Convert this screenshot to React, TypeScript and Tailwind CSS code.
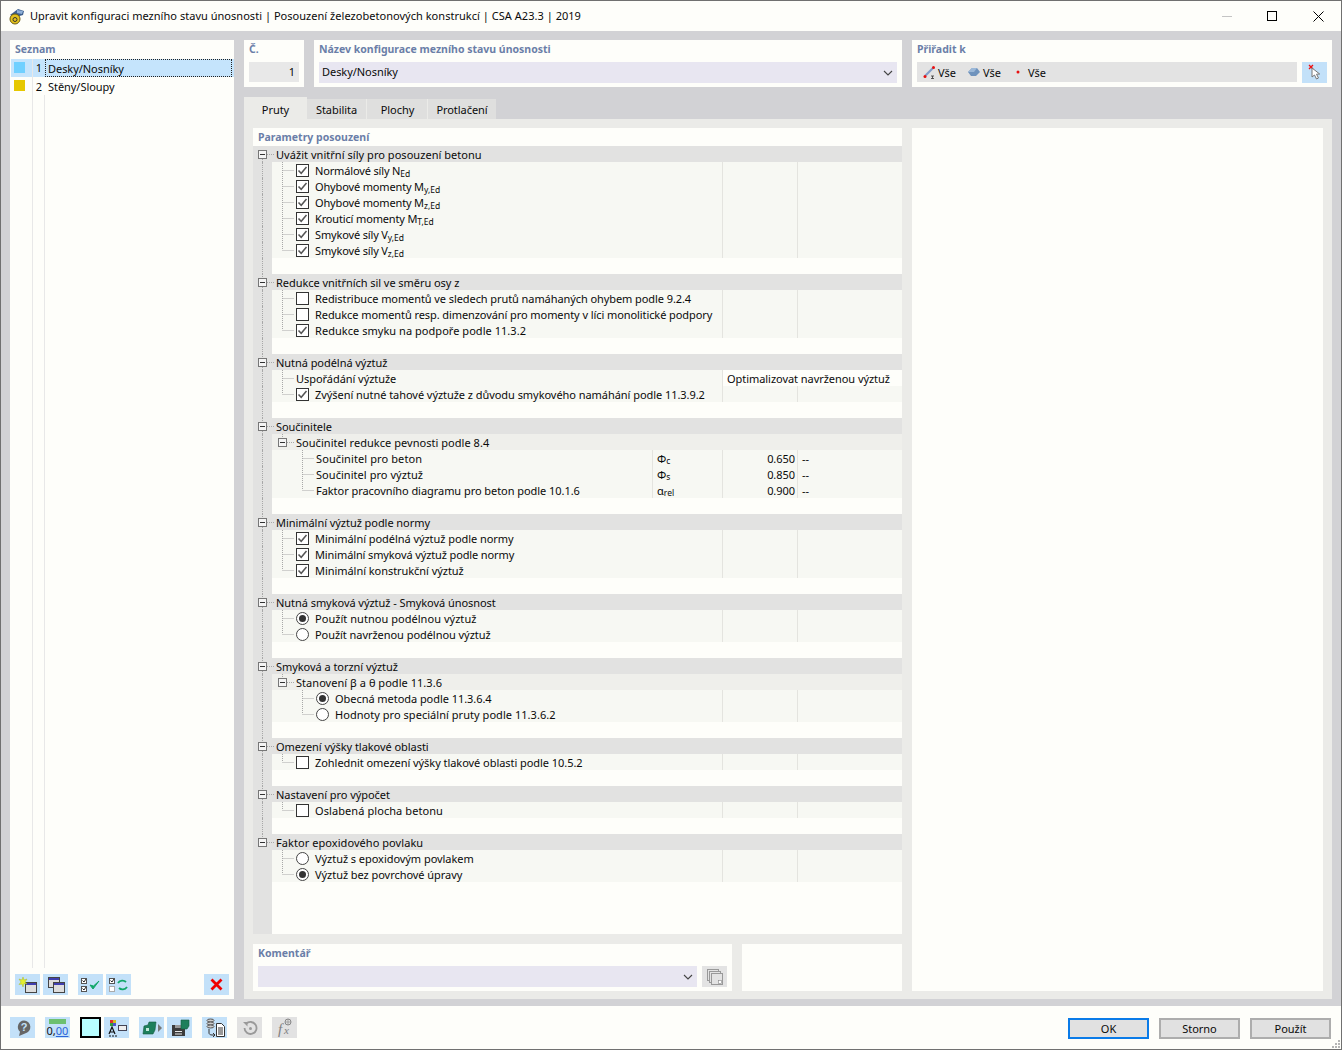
import type { ReactNode } from "react";

const DOT = "#a8a8a8";

type Item =
  | { type: "check"; label: ReactNode; on: boolean; level?: number }
  | { type: "radio"; label: ReactNode; on: boolean; level?: number }
  | { type: "text"; label: ReactNode; value?: string }
  | { type: "sub"; label: ReactNode }
  | { type: "coef"; label: ReactNode; symbol: ReactNode; value: string };

type Section = { title: ReactNode; items: Item[] };

const Sub = ({ children }: { children: ReactNode }) => <sub className="text-[8.5px] tracking-normal">{children}</sub>;
const Wide = ({ children }: { children: ReactNode }) => <span className="tracking-[0.04px]">{children}</span>;
const Tight = ({ children }: { children: ReactNode }) => <span className="tracking-[-0.15px]">{children}</span>;

const SECTIONS: Section[] = [
  {
    title: <Wide>Uvážit vnitřní síly pro posouzení betonu</Wide>,
    items: [
      { type: "check", on: true, label: <Tight>Normálové síly N<Sub>Ed</Sub></Tight> },
      { type: "check", on: true, label: <Tight>Ohybové momenty M<Sub>y,Ed</Sub></Tight> },
      { type: "check", on: true, label: <Tight>Ohybové momenty M<Sub>z,Ed</Sub></Tight> },
      { type: "check", on: true, label: <Tight>Krouticí momenty M<Sub>T,Ed</Sub></Tight> },
      { type: "check", on: true, label: <Tight>Smykové síly V<Sub>y,Ed</Sub></Tight> },
      { type: "check", on: true, label: <Tight>Smykové síly V<Sub>z,Ed</Sub></Tight> },
    ],
  },
  {
    title: "Redukce vnitřních sil ve směru osy z",
    items: [
      { type: "check", on: false, label: <span className="tracking-[-0.08px]">Redistribuce momentů ve sledech prutů namáhaných ohybem podle 9.2.4</span> },
      { type: "check", on: false, label: <span className="tracking-[-0.08px]">Redukce momentů resp. dimenzování pro momenty v líci monolitické podpory</span> },
      { type: "check", on: true, label: <Wide>Redukce smyku na podpoře podle 11.3.2</Wide> },
    ],
  },
  {
    title: "Nutná podélná výztuž",
    items: [
      { type: "text", label: "Uspořádání výztuže", value: "Optimalizovat navrženou výztuž" },
      { type: "check", on: true, label: "Zvýšení nutné tahové výztuže z důvodu smykového namáhání podle 11.3.9.2" },
    ],
  },
  {
    title: "Součinitele",
    items: [
      { type: "sub", label: <Wide>Součinitel redukce pevnosti podle 8.4</Wide> },
      { type: "coef", label: <span className="tracking-[0.1px]">Součinitel pro beton</span>, symbol: <>Φ<Sub>c</Sub></>, value: "0.650" },
      { type: "coef", label: <span className="tracking-[0.05px]">Součinitel pro výztuž</span>, symbol: <>Φ<Sub>s</Sub></>, value: "0.850" },
      { type: "coef", label: "Faktor pracovního diagramu pro beton podle 10.1.6", symbol: <>α<Sub>rel</Sub></>, value: "0.900" },
    ],
  },
  {
    title: "Minimální výztuž podle normy",
    items: [
      { type: "check", on: true, label: "Minimální podélná výztuž podle normy" },
      { type: "check", on: true, label: <span className="tracking-[-0.12px]">Minimální smyková výztuž podle normy</span> },
      { type: "check", on: true, label: "Minimální konstrukční výztuž" },
    ],
  },
  {
    title: "Nutná smyková výztuž - Smyková únosnost",
    items: [
      { type: "radio", on: true, label: <Wide>Použít nutnou podélnou výztuž</Wide> },
      { type: "radio", on: false, label: "Použít navrženou podélnou výztuž" },
    ],
  },
  {
    title: "Smyková a torzní výztuž",
    items: [
      { type: "sub", label: <Wide>Stanovení β a θ podle 11.3.6</Wide> },
      { type: "radio", level: 2, on: true, label: "Obecná metoda podle 11.3.6.4" },
      { type: "radio", level: 2, on: false, label: <Wide>Hodnoty pro speciální pruty podle 11.3.6.2</Wide> },
    ],
  },
  {
    title: "Omezení výšky tlakové oblasti",
    items: [{ type: "check", on: false, label: "Zohlednit omezení výšky tlakové oblasti podle 10.5.2" }],
  },
  {
    title: "Nastavení pro výpočet",
    items: [{ type: "check", on: false, label: <span className="tracking-[0.08px]">Oslabená plocha betonu</span> }],
  },
  {
    title: <span className="tracking-[0.06px]">Faktor epoxidového povlaku</span>,
    items: [
      { type: "radio", on: false, label: "Výztuž s epoxidovým povlakem" },
      { type: "radio", on: true, label: "Výztuž bez povrchové úpravy" },
    ],
  },
];

function Checkbox({ on }: { on: boolean }) {
  return (
    <svg width="13" height="13" viewBox="0 0 13 13" className="shrink-0">
      <rect x="0.5" y="0.5" width="12" height="12" fill="#fff" stroke="#333" />
      {on && <path d="M2.500 6.500 5.200 9.300 10.500 3" fill="none" stroke="#555" strokeWidth="1.500" />}
    </svg>
  );
}

function Radio({ on }: { on: boolean }) {
  return (
    <svg width="13" height="13" viewBox="0 0 13 13" className="shrink-0">
      <circle cx="6.500" cy="6.500" r="6" fill="#fff" stroke="#444" />
      {on && <circle cx="6.500" cy="6.500" r="3.500" fill="#333" />}
    </svg>
  );
}

function Connector({ level, last }: { level: number; last: boolean }) {
  const x = level === 2 ? 30.5 : 10.5;
  const w = level === 2 ? 44 : 24;
  return (
    <svg width={w} height="16" className="shrink-0">
      <path d={`M${x} 0V${last ? 8 : 16}M${x} 8.500H${x + 12}`} stroke={DOT} strokeDasharray="1 1" fill="none" />
    </svg>
  );
}

function Expander({ x, width, top, bottom }: { x: number; width: number; top?: boolean; bottom?: boolean }) {
  const c = x + 4.5;
  return (
    <svg width={width} height="16" className="shrink-0">
      {top && <path d={`M${c} 0V4`} stroke={DOT} strokeDasharray="1 1" />}
      {bottom && <path d={`M${c} 13V16`} stroke={DOT} strokeDasharray="1 1" />}
      <path d={`M${x + 9} 8.500H${width - 1}`} stroke={DOT} strokeDasharray="1 1" />
      <rect x={x + 0.5} y="4.500" width="8" height="8" fill="#f4f4f4" stroke="#777" />
      <path d={`M${x + 2} 8.500H${x + 7}`} stroke="#333" />
    </svg>
  );
}

function Gutter({ line = true }: { line?: boolean }) {
  return (
    <div className="w-[19px] shrink-0 bg-[#e2e2e1]">
      {line && <div className="ml-[9px] h-full border-l border-dotted border-[#a8a8a8]" />}
    </div>
  );
}

function TreeRow({ item, last, line }: { item: Item; last: boolean; line: boolean }) {
  if (item.type === "sub") {
    return (
      <div className="flex h-4">
        <Gutter line={line} />
        <div className="flex flex-1 items-center bg-[#efefeb]">
          <Expander x={6} width={24} top />
          <div className="pt-[2px]">{item.label}</div>
        </div>
      </div>
    );
  }
  if (item.type === "coef") {
    return (
      <div className="flex h-4">
        <Gutter line={line} />
        <div className="flex flex-1 items-center bg-[#f7f8f3]">
          <Connector level={2} last={last} />
          <div className="flex-1 pt-[2px] whitespace-nowrap">{item.label}</div>
          <div className="flex h-full w-[70px] items-center border-l border-[#e4e4df] pt-[2px] pl-1">{item.symbol}</div>
          <div className="flex h-full w-[75px] items-center justify-end border-l border-[#e4e4df] pt-[2px] pr-[2px]">{item.value}</div>
          <div className="flex h-full w-[105px] items-center border-l border-[#e4e4df] pt-[2px] pl-1">--</div>
        </div>
      </div>
    );
  }
  if (item.type === "text") {
    return (
      <div className="flex h-4">
        <Gutter line={line} />
        <div className="flex flex-1 items-center bg-[#f7f8f3]">
          <Connector level={1} last={last} />
          <div className="flex-1 pt-[2px] whitespace-nowrap">{item.label}</div>
          <div className="flex h-full w-[180px] items-center border-l border-[#e4e4df] bg-[#fefefa] pt-[2px] pl-1 whitespace-nowrap">
            {item.value}
          </div>
        </div>
      </div>
    );
  }
  const level = item.level ?? 1;
  return (
    <div className="flex h-4">
      <Gutter line={line} />
      <div className="flex flex-1 items-center bg-[#f7f8f3]">
        <Connector level={level} last={last} />
        {item.type === "check" ? <Checkbox on={item.on} /> : <Radio on={item.on} />}
        <div className="ml-[6px] flex-1 pt-[2px] whitespace-nowrap">{item.label}</div>
        <div className="h-full w-[75px] border-l border-[#e4e4df]" />
        <div className="h-full w-[105px] border-l border-[#e4e4df]" />
      </div>
    </div>
  );
}

function SectionBlock({ section, index }: { section: Section; index: number }) {
  const isLast = index === SECTIONS.length - 1;
  return (
    <>
      <div className="flex h-4 items-center bg-[#e2e2e1]">
        <Expander x={5} width={23} top={index > 0} bottom={!isLast} />
        <div className="pt-[2px]">{section.title}</div>
      </div>
      {section.items.map((item, i) => (
        <TreeRow key={i} item={item} last={i === section.items.length - 1} line={!isLast} />
      ))}
      {!isLast && (
        <div className="flex h-4">
          <Gutter />
        </div>
      )}
    </>
  );
}

function Label({ children, className = "" }: { children: ReactNode; className?: string }) {
  return <div className={`text-[10.5px] font-bold tracking-normal text-[#6b7ea8] ${className}`}>{children}</div>;
}

function ToolButton({ x, gray, children }: { x?: string; gray?: boolean; children: ReactNode }) {
  return (
    <div className={`flex h-[21px] w-[25px] items-center justify-center ${gray ? "bg-[#e2e2e2]" : "bg-[#c3e1f9]"} ${x ?? ""}`}>
      {children}
    </div>
  );
}

function Chevron({ className = "" }: { className?: string }) {
  return (
    <svg width="10" height="6" viewBox="0 0 10 6" className={className}>
      <path d="M1 1 5 5 9 1" fill="none" stroke="#444" strokeWidth="1.100" />
    </svg>
  );
}

const Win = ({ x = 0, y = 0 }: { x?: number; y?: number }) => (
  <g transform={`translate(${x} ${y})`}>
    <rect x="0.5" y="0.5" width="11" height="10" fill="#ddd" stroke="#444" />
    <rect x="1" y="1" width="10" height="2" fill="#3f3fb0" />
  </g>
);

const MiniCheck = ({ y, on = true }: { y: number; on?: boolean }) => (
  <g transform={`translate(1 ${y})`}>
    <rect x="0.5" y="0.5" width="5" height="5" fill="#fff" stroke={on ? "#555" : "#aaa"} />
    {on && <path d="M1.500 2.500 3 4 5 1" fill="none" stroke="#222" />}
  </g>
);

export default function App() {
  return (
    <div className="flex h-[1050px] w-[1342px] flex-col border border-[#707070] bg-[#fefefa] font-['Noto_Sans',sans-serif] text-[11px] leading-4 tracking-[-0.05px] text-[#0a0a0a]">
      {/* title bar */}
      <div className="flex h-[30px] shrink-0 items-center pl-[7px]">
        <svg width="18" height="18" viewBox="0 0 18 18" className="shrink-0">
          <path d="M2 8 10 2l6 2-1 4-7 2z" fill="#3d5f8e" />
          <path d="M9 3l6 1-1 3-5-1z" fill="#8fb0d8" />
          <circle cx="7" cy="12" r="5" fill="#e3c21c" stroke="#6b5a10" />
          <circle cx="7" cy="12.500" r="2" fill="none" stroke="#333" />
        </svg>
        <div className="ml-[4px] flex-1 tracking-[0.03px] whitespace-nowrap">
          Upravit konfiguraci mezního stavu únosnosti | Posouzení železobetonových konstrukcí | CSA A23.3 | 2019
        </div>
        <div className="flex w-[121px] items-center">
          <div className="ml-[2px] h-px w-[10px] bg-[#c4c4c4]" />
          <div className="ml-[35px] h-[10px] w-[10px] border border-black" />
          <svg width="11" height="11" viewBox="0 0 11 11" className="ml-[36px]">
            <path d="M.5.5l10 10M10.500.5l-10 10" stroke="#000" />
          </svg>
        </div>
      </div>

      {/* main area */}
      <div className="flex h-[975px] shrink-0 gap-[10px] bg-[#d2d2d5] pt-[9px] pr-[9px] pb-[7px] pl-[9px]">
        {/* list */}
        <div className="flex w-[224px] shrink-0 flex-col bg-[#fefefa] pl-px">
          <Label className="mt-[1px] h-[18px] pl-1 leading-[16px]">Seznam</Label>
          <div className="flex h-[18px] items-start bg-[#c5e4fc]">
            <div className="mt-[3px] ml-[3px] h-[11px] w-[11px] shrink-0 bg-[#70d0ff]" />
            <div className="ml-[7px] h-full w-3 shrink-0 border-l border-[#e8e8e8] pt-[1px] pr-[2px] text-right">1</div>
            <div className="mr-[2px] ml-[1px] flex h-full flex-1 items-center border border-dotted border-[#222] pt-[1px] pl-[2px]">
              Desky/Nosníky
            </div>
          </div>
          <div className="flex h-[18px] items-start">
            <div className="mt-[3px] ml-[3px] h-[11px] w-[11px] shrink-0 bg-[#e6c800]" />
            <div className="ml-[7px] h-full w-3 shrink-0 border-l border-[#e8e8e8] pt-[2px] pr-[2px] text-right">2</div>
            <div className="ml-[1px] flex-1 pt-[2px] pl-[3px]">Stěny/Sloupy</div>
          </div>
          <div className="flex h-[873px] shrink-0">
            <div className="w-[22px] border-r border-[#e8e8e8]" />
            <div className="w-3 border-r border-[#e8e8e8]" />
          </div>
          <div className="mt-[6px] flex h-[21px] items-start pl-1">
            <ToolButton>
              <svg width="20" height="18" viewBox="0 0 20 18">
                <Win x={7} y={6} />
                <path d="M5 1l1 3 3-1-2 3 2 2-3-.5L5 11 4 8l-3 .5L3 6 1 3l3 1z" fill="#e3ee30" stroke="#aab820" strokeWidth=".5" />
              </svg>
            </ToolButton>
            <ToolButton x="ml-[3px]">
              <svg width="20" height="18" viewBox="0 0 20 18">
                <Win x={2} y={1} />
                <Win x={7} y={6} />
              </svg>
            </ToolButton>
            <ToolButton x="ml-[10px]">
              <svg width="22" height="18" viewBox="0 0 22 18">
                <MiniCheck y={2} />
                <MiniCheck y={10} />
                <path d="M10 9l3 4 6-8-5.500 5z" fill="#12a86a" stroke="#12a86a" />
              </svg>
            </ToolButton>
            <ToolButton x="ml-[3px]">
              <svg width="22" height="18" viewBox="0 0 22 18">
                <MiniCheck y={2} />
                <MiniCheck y={10} on={false} />
                <path d="M10 7c2-3 6-3 8-1M19 11c-2 3-6 3-8 1" fill="none" stroke="#12a86a" strokeWidth="1.800" />
              </svg>
            </ToolButton>
            <ToolButton x="ml-[73px]">
              <svg width="13" height="13" viewBox="0 0 13 13">
                <path d="M1.500 1.500l10 10M11.500 1.500l-10 10" stroke="#f00000" strokeWidth="2.800" />
              </svg>
            </ToolButton>
          </div>
        </div>

        {/* right column */}
        <div className="flex w-[1088px] shrink-0 flex-col">
          <div className="flex h-[47px] shrink-0 gap-[10px]">
            <div className="flex w-[60px] flex-col bg-[#fefefa] px-[5px]">
              <Label className="mt-[1px] h-[21px] leading-[16px]">Č.</Label>
              <div className="flex h-5 items-center justify-end bg-[#e8e8e8] pr-1">1</div>
            </div>
            <div className="flex w-[588px] flex-col bg-[#fefefa] px-[5px]">
              <Label className="mt-[1px] h-[21px] leading-[16px]">Název konfigurace mezního stavu únosnosti</Label>
              <div className="flex h-[21px] items-center justify-between bg-[#e8e6f1] pr-[4px] pb-[2px] pl-[3px]">
                Desky/Nosníky
                <Chevron className="mt-[2px]" />
              </div>
            </div>
            <div className="flex w-[420px] flex-col bg-[#fefefa] px-[5px]">
              <Label className="mt-[1px] h-[21px] leading-[16px]">Přiřadit k</Label>
              <div className="flex h-[21px] gap-[5px]">
                <div className="flex h-5 flex-1 items-center bg-[#e3e3e3] pl-[6px]">
                  <svg width="13" height="14" viewBox="0 0 13 14" className="shrink-0">
                    <path d="M2 11 10 3" stroke="#7f9cc8" strokeWidth="2.200" />
                    <circle cx="10.500" cy="2.500" r="1.500" fill="#e81010" />
                    <circle cx="2" cy="11.500" r="1.500" fill="#e81010" />
                    <path d="M8 11h3M9.500 11v2.500M8 13.500h3" stroke="#333" strokeWidth=".8" />
                  </svg>
                  <span className="mt-[2px] ml-[2px]">Vše</span>
                  <svg width="12" height="8" viewBox="0 0 12 8" className="ml-[12px] shrink-0">
                    <path d="M0 4 4 0h5l3 4-4 4H3z" fill="#6f93bd" />
                    <path d="M0 4 4 0h5L6 4z" fill="#9bb8d8" />
                  </svg>
                  <span className="mt-[2px] ml-[3px]">Vše</span>
                  <svg width="4" height="4" viewBox="0 0 4 4" className="ml-[15px] shrink-0">
                    <circle cx="2" cy="2" r="1.500" fill="#e81010" />
                  </svg>
                  <span className="mt-[2px] ml-[8px]">Vše</span>
                </div>
                <div className="flex h-[21px] w-[25px] items-center justify-center bg-[#c3e1f9]">
                  <svg width="14" height="17" viewBox="0 0 14 17">
                    <path d="M1 1l4 4M5 1 1 5" stroke="#f01010" strokeWidth="1.300" />
                    <path d="M4 4v9l2.500-2 2 4 2-1-2-3.800 3.200-.2z" fill="#fff" stroke="#777" />
                  </svg>
                </div>
              </div>
            </div>
          </div>

          {/* tabs */}
          <div className="mt-[10px] flex h-[22px] shrink-0 items-end">
            <div className="flex h-[22px] w-[63px] items-center justify-center bg-[#ebebe8] pt-[4px]">Pruty</div>
            <div className="flex h-5 w-[60px] items-center justify-center border-r border-[#ebebe8] bg-[#dfdfde] pt-[2px]">Stabilita</div>
            <div className="flex h-5 w-[61px] items-center justify-center border-r border-[#ebebe8] bg-[#dfdfde] pt-[2px] pl-px">Plochy</div>
            <div className="flex h-5 w-[68px] items-center justify-center bg-[#dfdfde] pt-[2px]">Protlačení</div>
          </div>

          {/* tab body */}
          <div className="flex flex-1 gap-[10px] bg-[#ebebe8] p-[9px] pb-[8px]">
            <div className="flex w-[649px] shrink-0 flex-col gap-[10px]">
              <div className="flex h-[806px] flex-col bg-[#fefefa]">
                <Label className="flex h-[18px] shrink-0 items-center pl-[5px]">Parametry posouzení</Label>
                {SECTIONS.map((s, i) => (
                  <SectionBlock key={i} section={s} index={i} />
                ))}
                <div className="flex flex-1">
                  <Gutter line={false} />
                </div>
              </div>
              <div className="flex h-[47px] gap-[10px]">
                <div className="flex w-[479px] flex-col bg-[#fefefa] px-[5px]">
                  <Label className="mt-[1px] h-[21px] leading-[16px]">Komentář</Label>
                  <div className="flex h-[21px] gap-[5px]">
                    <div className="flex flex-1 items-center justify-end bg-[#e8e6f1] pr-[4px]">
                      <Chevron />
                    </div>
                    <div className="flex w-[25px] items-center justify-center bg-[#e3e3e3]">
                      <svg width="16" height="16" viewBox="0 0 16 16">
                        <rect x="0.500" y="0.500" width="11" height="11" fill="#e3e3e3" stroke="#999" />
                        <rect x="2.500" y="2.500" width="11" height="11" fill="#e3e3e3" stroke="#999" />
                        <rect x="4.500" y="4.500" width="11" height="11" fill="#e3e3e3" stroke="#999" />
                        <rect x="11.500" y="11.500" width="3" height="3" fill="#fff" stroke="#888" strokeWidth=".6" />
                      </svg>
                    </div>
                  </div>
                </div>
                <div className="w-[160px] bg-[#fefefa]" />
              </div>
            </div>
            <div className="w-[411px] shrink-0 bg-[#fefefa]" />
          </div>
        </div>
      </div>

      {/* bottom bar */}
      <div className="relative flex flex-1 items-start pt-[11px] pl-[9px]">
        <ToolButton>
          <svg width="18" height="18" viewBox="0 0 18 18">
            <path d="M10 1.500a6.500 6.500 0 0 1 1 12.900L5 17l1-4.200A6.500 6.500 0 0 1 10 1.500z" fill="#666" />
            <text x="10" y="12" textAnchor="middle" fontSize="11" fontWeight="bold" fill="#c3e1f9" fontFamily="Liberation Sans">?</text>
          </svg>
        </ToolButton>
        <ToolButton x="ml-[10px]">
          <div className="flex flex-col items-center leading-none">
            <div className="h-[5px] w-[17px] bg-[#6cc070]" />
            <div className="text-[11px] leading-[13px] tracking-normal text-[#111]">
              0,<span className="text-[#2c63d8] underline">00</span>
            </div>
          </div>
        </ToolButton>
        <div className="ml-[10px] h-[21px] w-[21px] border-2 border-black bg-[#b8feff]" />
        <ToolButton x="ml-[3px]">
          <svg width="20" height="18" viewBox="0 0 20 18">
            <rect x="3" y="1" width="3" height="3" fill="#e03030" />
            <rect x="6" y="1" width="3" height="3" fill="#d0c020" />
            <rect x="3" y="4" width="3" height="3" fill="#30a040" />
            <rect x="6" y="4" width="3" height="3" fill="#5050d0" />
            <rect x="11.500" y="6.500" width="8" height="5" fill="#eee" stroke="#445" />
            <path d="M2 15 5 8l3 7M3 13h4" fill="none" stroke="#111" strokeWidth="1.200" />
            <path d="M2 17h2M5 17h2M8 17h2" stroke="#111" />
          </svg>
        </ToolButton>
        <ToolButton x="ml-[10px]">
          <svg width="20" height="14" viewBox="0 0 20 14">
            <path d="M1 13l1-8 4-1 1-3h7l-1 8-2 4z" fill="#1d7f5c" stroke="#145a40" strokeWidth=".6" />
            <path d="M4 7h3v3H4z" fill="#bfe8d8" />
            <path d="M16 3l4 4-4 4z" fill="#777" />
          </svg>
        </ToolButton>
        <ToolButton x="ml-[3px]">
          <svg width="20" height="18" viewBox="0 0 20 18">
            <path d="M2 6h11l2 2v9H2z" fill="#3c3c3c" />
            <path d="M5 6h6v3H5z" fill="#9a9a9a" />
            <path d="M5 12h7v1H5zM5 14.500h7v1H5z" fill="#e8e8e8" />
            <path d="M11 1h8v6l-2 3h-6z" fill="#1d7f5c" stroke="#145a40" strokeWidth=".6" />
          </svg>
        </ToolButton>
        <ToolButton x="ml-[10px]">
          <svg width="20" height="19" viewBox="0 0 20 19">
            <ellipse cx="5.500" cy="2.500" rx="3.500" ry="1.500" fill="#ccc" stroke="#555" />
            <ellipse cx="5.500" cy="5.500" rx="3.500" ry="1.500" fill="#ccc" stroke="#555" />
            <ellipse cx="5.500" cy="8.500" rx="3.500" ry="1.500" fill="#ccc" stroke="#555" />
            <path d="M4 11v4c0 1 1 2 3 2h2M8 15l2 2-2 2" fill="none" stroke="#333" />
            <path d="M11.500 5.500h5l3 3v10h-8z" fill="#fff" stroke="#333" />
            <path d="M13 10h5M13 12h5M13 14h5M13 16h5" stroke="#333" />
          </svg>
        </ToolButton>
        <ToolButton gray x="ml-[10px]">
          <svg width="16" height="16" viewBox="0 0 16 16">
            <path d="M4 4a6 6 0 1 1-1.500 4" fill="none" stroke="#999" strokeWidth="1.800" />
            <path d="M1 2h4.500v4.500z" fill="#999" />
            <circle cx="8.500" cy="8.500" r="1.500" fill="#999" />
          </svg>
        </ToolButton>
        <ToolButton gray x="ml-[10px]">
          <svg width="20" height="19" viewBox="0 0 20 19">
            <circle cx="13" cy="4" r="3" fill="#ddd" stroke="#888" />
            <path d="M10 4h6M13 1v6" stroke="#888" strokeWidth=".6" />
            <text x="3" y="16" fontSize="15" fontStyle="italic" fontFamily="Liberation Serif" fill="#808080">f</text>
            <text x="9" y="16" fontSize="11" fontStyle="italic" fontFamily="Liberation Serif" fill="#808080">x</text>
          </svg>
        </ToolButton>
        <div className="ml-auto flex gap-[10px] pt-px pr-[10px]">
          <div className="flex h-[21px] w-[81px] items-center justify-center border-2 border-[#0a7be8] bg-[#e1e1e1]">OK</div>
          <div className="flex h-[21px] w-[81px] items-center justify-center border-2 border-[#adadad] bg-[#e1e1e1]">Storno</div>
          <div className="flex h-[21px] w-[81px] items-center justify-center border-2 border-[#adadad] bg-[#e1e1e1]">Použít</div>
        </div>
        <svg width="10" height="10" viewBox="0 0 10 10" className="absolute right-0 bottom-0">
          <path d="M7 1h2v2H7zM4 4h2v2H4zM7 4h2v2H7zM1 7h2v2H1zM4 7h2v2H4zM7 7h2v2H7z" fill="#b5b5b5" />
        </svg>
      </div>
    </div>
  );
}
